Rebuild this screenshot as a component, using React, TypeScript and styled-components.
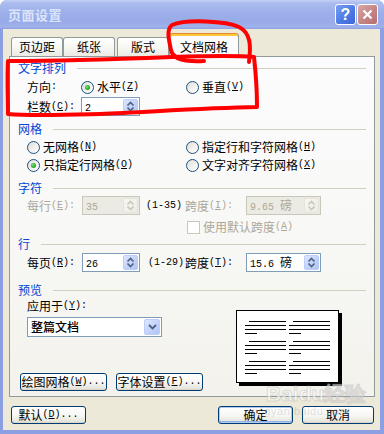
import React from "react";
import styled, { createGlobalStyle } from "styled-components";

const CJK = `"Noto Sans CJK SC", "Liberation Sans", sans-serif`;

const Global = createGlobalStyle`
  html, body { margin: 0; padding: 0; background: #ffffff; }
  body { font-family: ${CJK}; font-size: 12px; }
`;

const Window = styled.div`
  position: relative;
  width: 384px;
  height: 434px;
  display: flex;
  flex-direction: column;
  overflow: hidden;
  border-radius: 7px 7px 0 0;
  background: #8c9fe2;
  font-family: ${CJK};
  font-size: 12px;
  line-height: 1;
  color: #000;
`;

const TitleBar = styled.div`
  height: 29px;
  flex: 0 0 29px;
  box-sizing: border-box;
  display: flex;
  align-items: center;
  padding: 0 6px 0 8px;
  background: linear-gradient(180deg, #c4d1f6 0px, #abbcee 3px, #9db0ea 12px, #98abe8 22px, #a0b2ea 27px, #8c9fe2 29px);
`;

const Title = styled.div`
  font-weight: bold;
  font-size: 13px;
  color: #dbe5fa;
  letter-spacing: 0.5px;
`;

const TitleButtons = styled.div`
  margin-left: auto;
  display: flex;
  gap: 1px;
`;

const CapButton = styled.div<{ $kind: "help" | "close" }>`
  width: 21px;
  height: 21px;
  box-sizing: border-box;
  border: 1px solid #ffffff;
  border-radius: 3px;
  display: flex;
  align-items: center;
  justify-content: center;
  color: #fff;
  font-family: "Liberation Sans", sans-serif;
  font-weight: bold;
  font-size: 16px;
  background: ${(p) =>
    p.$kind === "help"
      ? "linear-gradient(135deg, #7aa0f4 0%, #4d79e6 55%, #3d66d8 100%)"
      : "linear-gradient(135deg, #d9a8a8 0%, #c48484 55%, #b56e6e 100%)"};
`;

const Frame = styled.div`
  flex: 1;
  display: flex;
  flex-direction: column;
  background: #ece9d8;
  margin: 0 4px 4px 3px;
  padding: 4px 5px 0 6px;
`;

const TabStrip = styled.div`
  height: 23px;
  display: flex;
  align-items: flex-end;
`;

const Tab = styled.div<{ $w: number; $ml?: number }>`
  width: ${(p) => p.$w}px;
  margin-left: ${(p) => p.$ml ?? 0}px;
  height: 19px;
  box-sizing: border-box;
  border: 1px solid #919b9c;
  border-bottom: none;
  border-radius: 3px 3px 0 0;
  background: linear-gradient(180deg, #ffffff 0%, #f7f7f4 50%, #ebeae3 100%);
  display: flex;
  align-items: center;
  justify-content: center;
`;

const ActiveTab = styled.div`
  position: relative;
  z-index: 2;
  width: 70px;
  height: 24px;
  margin-bottom: -1px;
  box-sizing: border-box;
  border: 1px solid #919b9c;
  border-top: 1px solid #e68b2c;
  border-bottom: none;
  border-radius: 3px 3px 0 0;
  box-shadow: inset 0 2px 0 #ffc73c;
  background: #fcfcfe;
  display: flex;
  align-items: center;
  justify-content: center;
  padding-top: 2px;
`;

const Panel = styled.div`
  height: 341px;
  box-sizing: border-box;
  border: 1px solid #919b9c;
  background: linear-gradient(180deg, #fcfcfe 0%, #f8f8f6 50%, #f3f2ec 100%);
  padding: 3px 8px 0 8px;
  display: flex;
  flex-direction: column;
`;

const Header = styled.div<{ $mt: number }>`
  height: 16px;
  margin-top: ${(p) => p.$mt}px;
  display: flex;
  align-items: center;
  color: #0046d5;
`;

const Rule = styled.div`
  flex: 1;
  height: 1px;
  margin-left: 11px;
  background: #d0d0bf;
`;

const Row = styled.div<{ $h?: number; $mt?: number; $pl?: number }>`
  display: flex;
  align-items: center;
  height: ${(p) => p.$h ?? 18}px;
  margin-top: ${(p) => p.$mt ?? 0}px;
  padding-left: ${(p) => p.$pl ?? 9}px;
  white-space: nowrap;
`;

const Cell = styled.div<{ $w?: number; $pl?: number; $off?: boolean }>`
  flex: 0 0 ${(p) => (p.$w ? `${p.$w}px` : "auto")};
  box-sizing: border-box;
  padding-left: ${(p) => p.$pl ?? 0}px;
  display: flex;
  align-items: center;
  color: ${(p) => (p.$off ? "#aca899" : "#000")};
`;

const Lat = styled.span`
  font-family: "Liberation Mono", "DejaVu Sans Mono", monospace;
  font-size: 10px;
`;

const Key = ({ k }: { k: string }) => (
  <Lat>
    (<u>{k}</u>)
  </Lat>
);

const RadioDot = styled.span<{ $on?: boolean }>`
  position: relative;
  flex: 0 0 13px;
  width: 13px;
  height: 13px;
  box-sizing: border-box;
  border-radius: 50%;
  border: 1px solid #1c5180;
  margin-right: 3px;
  background: linear-gradient(135deg, #dcdbd3 0%, #efeeea 45%, #ffffff 100%);
  &::after {
    content: "";
    display: ${(p) => (p.$on ? "block" : "none")};
    position: absolute;
    left: 3px;
    top: 3px;
    width: 5px;
    height: 5px;
    border-radius: 50%;
    background: radial-gradient(circle at 40% 40%, #8ee28e 0%, #2fb52f 45%, #1b8f1b 100%);
  }
`;

const Option = styled.div<{ $w?: number }>`
  flex: 0 0 ${(p) => (p.$w ? `${p.$w}px` : "auto")};
  display: flex;
  align-items: center;
`;

const CheckBox = styled.span`
  flex: 0 0 13px;
  width: 13px;
  height: 13px;
  box-sizing: border-box;
  border: 1px solid #cac8bb;
  background: #ffffff;
  margin-right: 3px;
`;

const Spin = styled.div<{ $w: number; $off?: boolean }>`
  flex: 0 0 ${(p) => p.$w}px;
  height: 19px;
  box-sizing: border-box;
  border: 1px solid ${(p) => (p.$off ? "#c9c7ba" : "#7f9db9")};
  background: ${(p) => (p.$off ? "#ebebe4" : "#ffffff")};
  color: ${(p) => (p.$off ? "#aca899" : "#000")};
  display: flex;
  align-items: center;
`;

const FieldText = styled.span`
  flex: 1;
  padding-left: 3px;
  white-space: nowrap;
`;

const ArrowBtn = styled.div<{ $off?: boolean; $w?: number }>`
  flex: 0 0 ${(p) => p.$w ?? 15}px;
  height: ${(p) => (p.$w ?? 15)}px;
  margin-right: 1px;
  box-sizing: border-box;
  border-radius: 2px;
  border: 1px solid ${(p) => (p.$off ? "#e6e4da" : "#bccdf8")};
  background: ${(p) =>
    p.$off
      ? "linear-gradient(135deg, #f7f7f4 0%, #eceae2 100%)"
      : "linear-gradient(135deg, #dde7fe 0%, #c4d4fa 50%, #b2c5f4 100%)"};
  display: flex;
  align-items: center;
  justify-content: center;
`;

const SpinBox = ({ w, value, off }: { w: number; value: React.ReactNode; off?: boolean }) => (
  <Spin $w={w} $off={off}>
    <FieldText>{value}</FieldText>
    <ArrowBtn $off={off}>
      <svg width="9" height="11" viewBox="0 0 9 11">
        <path
          d="M1.5 4.5 L4.5 1.5 L7.5 4.5 M1.5 6.5 L4.5 9.5 L7.5 6.5"
          fill="none"
          stroke={off ? "#c9c7ba" : "#4d6185"}
          strokeWidth="1.6"
        />
      </svg>
    </ArrowBtn>
  </Spin>
);

const Lower = styled.div`
  display: flex;
`;

const LeftCol = styled.div`
  flex: 0 0 200px;
  display: flex;
  flex-direction: column;
`;

const Drop = styled.div`
  margin: 3px 0 0 9px;
  width: 135px;
  height: 20px;
  box-sizing: border-box;
  border: 1px solid #7f9db9;
  background: #fff;
  display: flex;
  align-items: center;
`;

const DropText = styled.span`
  flex: 1;
  padding-left: 3px;
  font-weight: 500;
`;

const ButtonRow = styled.div<{ $mt?: number; $pl?: number }>`
  display: flex;
  gap: 9px;
  margin-top: ${(p) => p.$mt ?? 0}px;
  padding-left: ${(p) => p.$pl ?? 0}px;
`;

const XPButton = styled.div<{ $w: number; $def?: boolean; $ml?: number }>`
  width: ${(p) => p.$w}px;
  height: 18px;
  margin-left: ${(p) => (p.$ml === undefined ? "0" : `${p.$ml}px`)};
  box-sizing: border-box;
  border: 1px solid #003c74;
  border-radius: 3px;
  background: linear-gradient(180deg, #ffffff 0%, #f6f6f2 55%, #e6e5dd 90%, #d6d0c5 100%);
  box-shadow: ${(p) => (p.$def ? "inset 0 0 0 1px #b2c9f1, inset 0 -1px 0 1px #8fb0e8" : "none")};
  display: flex;
  align-items: center;
  justify-content: center;
  white-space: nowrap;
`;

const PageWrap = styled.div`
  margin: 12px 0 0 18px;
  width: 103px;
  height: 73px;
  box-sizing: border-box;
  border: 1px solid #000;
  background: #fff;
  box-shadow: 3px 3px 0 #000;
`;

const BottomBar = styled.div`
  margin-top: 9px;
  display: flex;
  padding-left: 2px;
  padding-right: 1px;
`;

const Spacer = styled.div`
  flex: 1;
`;

const Overlay = styled.svg`
  position: absolute;
  left: 0;
  top: 0;
  pointer-events: none;
  z-index: 5;
`;

const Watermark = styled.div`
  position: absolute;
  left: 252px;
  top: 382px;
  z-index: 4;
  pointer-events: none;
  display: flex;
  flex-direction: column;
  align-items: flex-start;
`;

const WmMain = styled.div`
  margin-left: 14px;
  font-family: "Liberation Sans", sans-serif;
  font-weight: bold;
  font-size: 21px;
  color: rgba(255, 255, 255, 0.55);
  -webkit-text-stroke: 1px rgba(160, 160, 160, 0.35);
  line-height: 24px;
`;

const WmSub = styled.div`
  font-family: "Liberation Sans", sans-serif;
  font-size: 11px;
  color: rgba(150, 150, 150, 0.3);
  letter-spacing: 0.5px;
`;

const paraLines = (x0: number, y0: number) => [
  [x0 + 4, x0 + 41, y0],
  [x0, x0 + 41, y0 + 4],
  [x0, x0 + 41, y0 + 8],
  [x0, x0 + 12, y0 + 12],
];

const PreviewPage = () => {
  const lines: number[][] = [];
  [10, 30, 50].forEach((y) => {
    lines.push(...paraLines(8, y), ...paraLines(52, y));
  });
  return (
    <PageWrap>
      <svg width="101" height="71" viewBox="0 0 101 71">
        {lines.map(([a, b, y], i) => (
          <line key={i} x1={a} x2={b} y1={y + 0.5} y2={y + 0.5} stroke="#000" strokeWidth="1" />
        ))}
      </svg>
    </PageWrap>
  );
};

export default function App() {
  return (
    <>
      <Global />
      <Window>
        <TitleBar>
          <Title>页面设置</Title>
          <TitleButtons>
            <CapButton $kind="help">?</CapButton>
            <CapButton $kind="close">
              <svg width="11" height="11" viewBox="0 0 11 11">
                <path d="M1.5 1.5 L9.5 9.5 M9.5 1.5 L1.5 9.5" stroke="#fff" strokeWidth="2.2" />
              </svg>
            </CapButton>
          </TitleButtons>
        </TitleBar>
        <Frame>
          <TabStrip>
            <Tab $w={52} $ml={2}>页边距</Tab>
            <Tab $w={52}>纸张</Tab>
            <Tab $w={52} $ml={2}>版式</Tab>
            <ActiveTab>文档网格</ActiveTab>
          </TabStrip>
          <Panel>
            <Header $mt={0}>
              文字排列
              <Rule />
            </Header>
            <Row $mt={2}>
              <Cell $w={54}>
                方向<Lat>:</Lat>
              </Cell>
              <Option $w={105}>
                <RadioDot $on />
                水平<Key k="Z" />
              </Option>
              <Option>
                <RadioDot />
                垂直<Key k="V" />
              </Option>
            </Row>
            <Row $mt={1} $h={19}>
              <Cell $w={54}>
                栏数<Key k="C" />
                <Lat>:</Lat>
              </Cell>
              <SpinBox w={59} value={<Lat>2</Lat>} />
            </Row>

            <Header $mt={5}>
              网格
              <Rule />
            </Header>
            <Row $mt={1}>
              <Option $w={159}>
                <RadioDot />
                无网格<Key k="N" />
              </Option>
              <Option>
                <RadioDot />
                指定行和字符网格<Key k="H" />
              </Option>
            </Row>
            <Row>
              <Option $w={159}>
                <RadioDot $on />
                只指定行网格<Key k="O" />
              </Option>
              <Option>
                <RadioDot />
                文字对齐字符网格<Key k="X" />
              </Option>
            </Row>

            <Header $mt={6}>
              字符
              <Rule />
            </Header>
            <Row $h={19}>
              <Cell $w={55} $off>
                每行<Key k="E" />
                <Lat>:</Lat>
              </Cell>
              <SpinBox w={58} value={<Lat>35</Lat>} off />
              <Cell $w={45} $pl={6}>
                <Lat>(1-35)</Lat>
              </Cell>
              <Cell $w={61} $off>
                跨度<Key k="I" />
                <Lat>:</Lat>
              </Cell>
              <SpinBox w={75} value={<><Lat>9.65 </Lat>磅</>} off />
            </Row>
            <Row $mt={3} $pl={169}>
              <CheckBox />
              <Cell $off>
                使用默认跨度<Key k="A" />
              </Cell>
            </Row>

            <Header $mt={0}>
              行
              <Rule />
            </Header>
            <Row $mt={1} $h={19}>
              <Cell $w={55}>
                每页<Key k="R" />
                <Lat>:</Lat>
              </Cell>
              <SpinBox w={58} value={<Lat>26</Lat>} />
              <Cell $w={45} $pl={8}>
                <Lat>(1-29)</Lat>
              </Cell>
              <Cell $w={61}>
                跨度<Key k="T" />
                <Lat>:</Lat>
              </Cell>
              <SpinBox w={75} value={<><Lat>15.6 </Lat>磅</>} />
            </Row>

            <Header $mt={10}>
              预览
              <Rule />
            </Header>
            <Lower>
              <LeftCol>
                <Row $h={16}>
                  应用于<Key k="Y" />
                  <Lat>:</Lat>
                </Row>
                <Drop>
                  <DropText>整篇文档</DropText>
                  <ArrowBtn $w={16}>
                    <svg width="9" height="6" viewBox="0 0 9 6">
                      <path d="M1 1 L4.5 4.5 L8 1" fill="none" stroke="#4d6185" strokeWidth="1.8" />
                    </svg>
                  </ArrowBtn>
                </Drop>
                <ButtonRow $mt={36} $pl={2}>
                  <XPButton $w={87}>
                    绘图网格<Key k="W" />
                    <Lat>...</Lat>
                  </XPButton>
                  <XPButton $w={87}>
                    字体设置<Key k="F" />
                    <Lat>...</Lat>
                  </XPButton>
                </ButtonRow>
              </LeftCol>
              <PreviewPage />
            </Lower>
          </Panel>
          <BottomBar>
            <XPButton $w={75}>
              默认<Key k="D" />
              <Lat>...</Lat>
            </XPButton>
            <Spacer />
            <XPButton $w={75} $def>
              确定
            </XPButton>
            <XPButton $w={72} $ml={9}>
              取消
            </XPButton>
          </BottomBar>
        </Frame>

        <Watermark>
          <WmMain>Baidu经验</WmMain>
          <WmSub>jingyan.baidu.com</WmSub>
        </Watermark>

        <Overlay width="384" height="434" viewBox="0 0 384 434">
          <g fill="none" stroke="#ff0000" strokeWidth="4" strokeLinecap="round" strokeLinejoin="round">
            <path d="M204 61 C186 62 173 60 171 50 C169 40 166 30 172 25 C186 19 226 21 239 27 C251 33 251 46 249 62" />
            <path d="M10 61 C60 61 120 59 172 57 C200 56 235 55 254 57 C256 75 257 92 257 107 C200 108 150 112 100 114 C60 115 30 116 8 114 C8 95 7 78 8 61" />
          </g>
        </Overlay>
      </Window>
    </>
  );
}
